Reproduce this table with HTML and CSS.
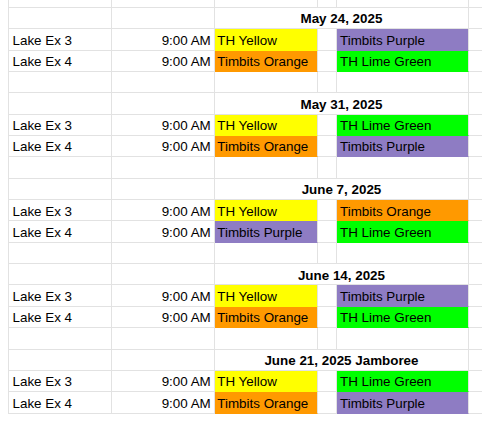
FILE: index.html
```html
<!DOCTYPE html>
<html>
<head>
<meta charset="utf-8">
<link rel="stylesheet" href="styles.css">
</head>
<body>
<div class="sheet">
  <!-- partial top row -->
  <div class="c"></div><div class="c"></div><div class="c"></div><div class="c"></div><div class="c"></div><div class="c"></div>

  <!-- May 24 -->
  <div class="c"></div><div class="c"></div><div class="c hdr">May 24, 2025</div><div class="c"></div>
  <div class="c">Lake Ex 3</div><div class="c time">9:00 AM</div><div class="c team yellow">TH Yellow</div><div class="c"></div><div class="c team purple">Timbits Purple</div><div class="c"></div>
  <div class="c">Lake Ex 4</div><div class="c time">9:00 AM</div><div class="c team orange">Timbits Orange</div><div class="c"></div><div class="c team lime">TH Lime Green</div><div class="c"></div>
  <div class="c"></div><div class="c"></div><div class="c"></div><div class="c"></div><div class="c"></div><div class="c"></div>

  <!-- May 31 -->
  <div class="c"></div><div class="c"></div><div class="c hdr">May 31, 2025</div><div class="c"></div>
  <div class="c">Lake Ex 3</div><div class="c time">9:00 AM</div><div class="c team yellow">TH Yellow</div><div class="c"></div><div class="c team lime">TH Lime Green</div><div class="c"></div>
  <div class="c">Lake Ex 4</div><div class="c time">9:00 AM</div><div class="c team orange">Timbits Orange</div><div class="c"></div><div class="c team purple">Timbits Purple</div><div class="c"></div>
  <div class="c"></div><div class="c"></div><div class="c"></div><div class="c"></div><div class="c"></div><div class="c"></div>

  <!-- June 7 -->
  <div class="c"></div><div class="c"></div><div class="c hdr">June 7, 2025</div><div class="c"></div>
  <div class="c">Lake Ex 3</div><div class="c time">9:00 AM</div><div class="c team yellow">TH Yellow</div><div class="c"></div><div class="c team orange">Timbits Orange</div><div class="c"></div>
  <div class="c">Lake Ex 4</div><div class="c time">9:00 AM</div><div class="c team purple">Timbits Purple</div><div class="c"></div><div class="c team lime">TH Lime Green</div><div class="c"></div>
  <div class="c"></div><div class="c"></div><div class="c"></div><div class="c"></div><div class="c"></div><div class="c"></div>

  <!-- June 14 -->
  <div class="c"></div><div class="c"></div><div class="c hdr">June 14, 2025</div><div class="c"></div>
  <div class="c">Lake Ex 3</div><div class="c time">9:00 AM</div><div class="c team yellow">TH Yellow</div><div class="c"></div><div class="c team purple">Timbits Purple</div><div class="c"></div>
  <div class="c">Lake Ex 4</div><div class="c time">9:00 AM</div><div class="c team orange">Timbits Orange</div><div class="c"></div><div class="c team lime">TH Lime Green</div><div class="c"></div>
  <div class="c"></div><div class="c"></div><div class="c"></div><div class="c"></div><div class="c"></div><div class="c"></div>

  <!-- June 21 -->
  <div class="c"></div><div class="c"></div><div class="c hdr">June 21, 2025 Jamboree</div><div class="c"></div>
  <div class="c">Lake Ex 3</div><div class="c time">9:00 AM</div><div class="c team yellow">TH Yellow</div><div class="c"></div><div class="c team lime">TH Lime Green</div><div class="c"></div>
  <div class="c">Lake Ex 4</div><div class="c time">9:00 AM</div><div class="c team orange">Timbits Orange</div><div class="c"></div><div class="c team purple">Timbits Purple</div><div class="c"></div>
</div>
</body>
</html>
```

FILE: styles.css
```css
html, body {
  margin: 0;
  padding: 0;
  background: #ffffff;
  overflow: hidden;
}

.sheet {
  display: grid;
  grid-template-columns: 103.7px 102.6px 103.4px 19.3px 131.7px 60px;
  grid-auto-rows: 21.37px;
  margin-top: -13.57px;
  margin-left: 7.5px;
  border-left: 1px solid #e2e2e2;
  box-sizing: border-box;
  width: 474.5px;
  overflow: hidden;
  font-family: "Liberation Sans", Arial, sans-serif;
  font-size: 13.4px;
  color: #000000;
}

.c {
  box-sizing: border-box;
  border-right: 1px solid #e2e2e2;
  border-bottom: 1px solid #e2e2e2;
  padding: 1.5px 3px 0 4px;
  line-height: 19.4px;
  white-space: nowrap;
  overflow: hidden;
}

.time {
  text-align: right;
  padding-right: 3px;
}

.hdr {
  grid-column: span 3;
  font-weight: bold;
  text-align: center;
  padding-left: 0;
  padding-right: 0;
}

.team {
  padding-left: 2.5px;
  border-bottom-color: transparent;
}

.yellow { background: #ffff00; }
.orange { background: #ff9900; }
.purple { background: #8e7cc3; }
.lime   { background: #00ff00; }
```
